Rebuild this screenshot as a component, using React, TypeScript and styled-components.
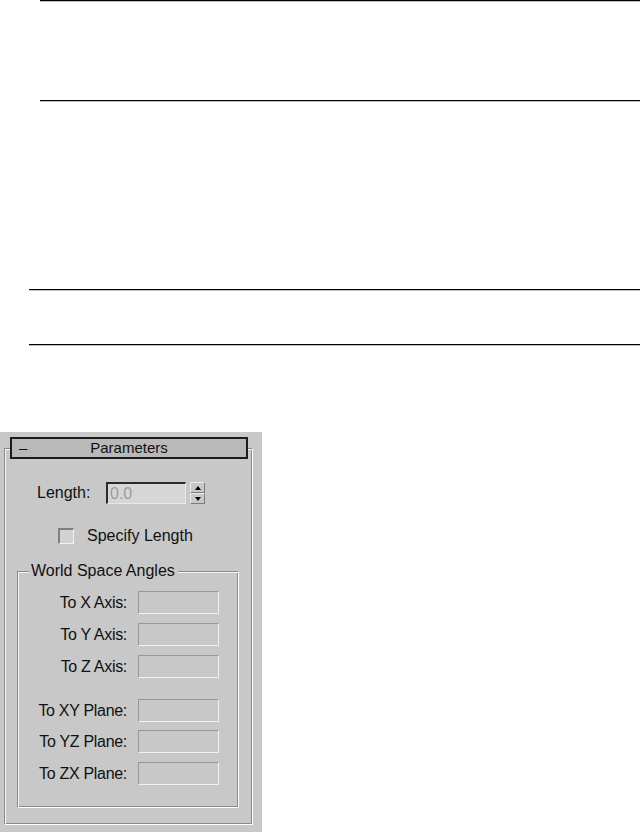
import React, { FC } from 'react';
import styled, { createGlobalStyle } from 'styled-components';

const GlobalStyle = createGlobalStyle`
  html, body {
    margin: 0;
    padding: 0;
    background: #ffffff;
  }
  body {
    width: 641px;
    height: 832px;
    overflow: hidden;
    font-family: 'Liberation Sans', Arial, sans-serif;
  }
`;

const angleRows = [
  { label: 'To X Axis:', gap: 0 },
  { label: 'To Y Axis:', gap: 9 },
  { label: 'To Z Axis:', gap: 9 },
  { label: 'To XY Plane:', gap: 21 },
  { label: 'To YZ Plane:', gap: 8 },
  { label: 'To ZX Plane:', gap: 9 },
];

const App: FC = () => (
  <Page>
    <GlobalStyle />
    <Rule $inset={40} $gap={0} />
    <Rule $inset={40} $gap={99} />
    <Rule $inset={29} $gap={188} />
    <Rule $inset={29} $gap={54} />

    <Panel>
      <RolloutHeader>
        <Collapse>–</Collapse>
        <HeaderTitle>Parameters</HeaderTitle>
      </RolloutHeader>

      <Rollout>
        <LengthRow>
          <FieldLabel>Length:</FieldLabel>
          <NumberBox>0.0</NumberBox>
          <Spinner>
            <SpinButton>
              <Arrow $up />
            </SpinButton>
            <SpinButton>
              <Arrow />
            </SpinButton>
          </Spinner>
        </LengthRow>

        <CheckRow>
          <CheckBox />
          <CheckLabel>Specify Length</CheckLabel>
        </CheckRow>

        <Group>
          <GroupTitle>World Space Angles</GroupTitle>
          <AngleList>
            {angleRows.map(row => (
              <AngleRow key={row.label} $gap={row.gap}>
                <AngleLabel>{row.label}</AngleLabel>
                <ReadOut />
              </AngleRow>
            ))}
          </AngleList>
        </Group>
      </Rollout>
    </Panel>
  </Page>
);

export default App;

const Page = styled.div`
  display: flex;
  flex-direction: column;
  width: 641px;
`;

const Rule = styled.div<{ $inset: number; $gap: number }>`
  height: 1px;
  background: #000;
  box-shadow: 0 1px 0 rgba(0, 0, 0, 0.25);
  margin-left: ${p => p.$inset}px;
  margin-top: ${p => p.$gap}px;
  margin-right: 1px;
`;

const Panel = styled.div`
  margin-top: 87px;
  width: 262px;
  height: 400px;
  background: #c8c8c8;
  display: flex;
  flex-direction: column;
  color: #111;
  font-size: 16px;
`;

const RolloutHeader = styled.div`
  position: relative;
  z-index: 1;
  margin: 5px 0 0 10px;
  width: 238px;
  height: 22px;
  box-sizing: border-box;
  border: 2px solid #1c1c1c;
  background: #b9b9b9;
  display: flex;
  align-items: center;
  justify-content: center;
`;

const Collapse = styled.span`
  position: absolute;
  left: 7px;
  top: 0;
  line-height: 17px;
  font-size: 15px;
`;

const HeaderTitle = styled.span`
  font-size: 15px;
  line-height: 18px;
`;

const Rollout = styled.div`
  margin: -11px 0 0 4px;
  width: 249px;
  height: 377px;
  box-sizing: border-box;
  border: 1px solid;
  border-color: #8a8a8a #ffffff #ffffff #8a8a8a;
  box-shadow: inset 1px 1px 0 #f4f4f4, inset -1px -1px 0 #8a8a8a;
  display: flex;
  flex-direction: column;
  padding: 33px 0 0 2px;
`;

const LengthRow = styled.div`
  display: flex;
  align-items: center;
  padding-left: 30px;
`;

const FieldLabel = styled.span`
  width: 69px;
  line-height: 18px;
`;

const NumberBox = styled.div`
  width: 80px;
  height: 22px;
  box-sizing: border-box;
  border-style: solid;
  border-width: 2px 1px 1px 2px;
  border-color: #2a2a2a #e8e8e8 #e8e8e8 #2a2a2a;
  background: #d6d6d6;
  color: #9c9c9c;
  padding-left: 2px;
  line-height: 19px;
`;

const Spinner = styled.div`
  margin-left: 4px;
  width: 15px;
  height: 22px;
  display: flex;
  flex-direction: column;
`;

const SpinButton = styled.div`
  flex: 1;
  box-sizing: border-box;
  border-style: solid;
  border-width: 1px;
  border-color: #ececec #7c7c7c #7c7c7c #ececec;
  background: #c8c8c8;
  display: flex;
  align-items: center;
  justify-content: center;
`;

const Arrow = styled.span<{ $up?: boolean }>`
  width: 0;
  height: 0;
  border-left: 3px solid transparent;
  border-right: 3px solid transparent;
  ${p =>
    p.$up ? 'border-bottom: 4px solid #000;' : 'border-top: 4px solid #000;'}
`;

const CheckRow = styled.div`
  display: flex;
  align-items: center;
  margin-top: 23px;
  padding-left: 51px;
`;

const CheckBox = styled.div`
  width: 16px;
  height: 16px;
  box-sizing: border-box;
  border-style: solid;
  border-width: 2px 1px 1px 2px;
  border-color: #808080 #f4f4f4 #f4f4f4 #808080;
  background: #d2d2d2;
`;

const CheckLabel = styled.span`
  margin-left: 13px;
  line-height: 18px;
`;

const Group = styled.div`
  margin: 26px 0 0 10px;
  width: 222px;
  height: 237px;
  box-sizing: border-box;
  border: 1px solid;
  border-color: #8a8a8a #ffffff #ffffff #8a8a8a;
  box-shadow: inset 1px 1px 0 #f4f4f4, inset -1px -1px 0 #8a8a8a;
  display: flex;
  flex-direction: column;
`;

const GroupTitle = styled.span`
  align-self: flex-start;
  margin: -10px 0 0 11px;
  padding: 0 3px 0 2px;
  background: #c8c8c8;
  line-height: 18px;
`;

const AngleList = styled.div`
  margin-top: 11px;
  display: flex;
  flex-direction: column;
`;

const AngleRow = styled.div<{ $gap: number }>`
  display: grid;
  grid-template-columns: 109px 81px;
  column-gap: 11px;
  align-items: center;
  margin-top: ${p => p.$gap}px;
`;

const AngleLabel = styled.span`
  text-align: right;
  line-height: 18px;
  letter-spacing: -0.3px;
`;

const ReadOut = styled.div`
  height: 23px;
  box-sizing: border-box;
  border: 1px solid;
  border-color: #979797 #f2f2f2 #f2f2f2 #979797;
  background: #c8c8c8;
`;
